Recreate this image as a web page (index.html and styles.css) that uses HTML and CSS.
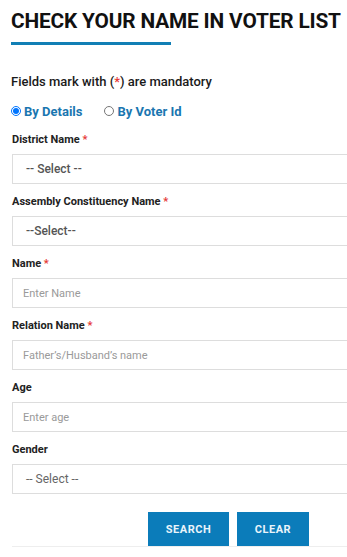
FILE: index.html
```html
<!DOCTYPE html>
<html>
<head>
    <meta charset="UTF-8">
    <title>Check Your Name in Voter List</title>
    <link rel="stylesheet" href="styles.css">
</head>
<body>
    <div class="container">
        <h1 class="page-title">CHECK YOUR NAME IN VOTER LIST</h1>
        <div class="title-bar"></div>

        <p class="mandatory">Fields mark with (<span class="req">*</span>) are mandatory</p>

        <div class="search-type">
            <label class="radio-opt"><input type="radio" name="stype" checked> By Details</label>
            <label class="radio-opt"><input type="radio" name="stype"> By Voter Id</label>
        </div>

        <form class="voter-form">
            <div class="field">
                <label class="field-label">District Name <span class="req">*</span></label>
                <div class="field-box select-box">-- Select --</div>
            </div>
            <div class="field">
                <label class="field-label">Assembly Constituency Name <span class="req">*</span></label>
                <div class="field-box select-box">--Select--</div>
            </div>
            <div class="field">
                <label class="field-label">Name <span class="req">*</span></label>
                <input class="field-box" type="text" placeholder="Enter Name">
            </div>
            <div class="field">
                <label class="field-label">Relation Name <span class="req">*</span></label>
                <input class="field-box" type="text" placeholder="Father’s/Husband’s name">
            </div>
            <div class="field">
                <label class="field-label">Age</label>
                <input class="field-box" type="text" placeholder="Enter age">
            </div>
            <div class="field">
                <label class="field-label">Gender</label>
                <div class="field-box select-box light">-- Select --</div>
            </div>

            <div class="actions">
                <button type="button" class="action-btn search-btn">SEARCH</button>
                <button type="button" class="action-btn clear-btn">CLEAR</button>
            </div>
        </form>
    </div>
</body>
</html>
```

FILE: styles.css
```css
body {
    font-family: Roboto, 'Liberation Sans', sans-serif;
    margin: 0;
    background: #fff;
    color: #1a1a1a;
    overflow: hidden;
}

.container {
    padding-left: 11px;
}

.page-title {
    margin: 0;
    padding-top: 9px;
    font-size: 20.8px;
    font-weight: 700;
    line-height: 24px;
    color: #111;
    letter-spacing: -0.15px;
    white-space: nowrap;
}

.title-bar {
    width: 160px;
    height: 3px;
    background: #117fb5;
    margin-top: 9px;
}

.mandatory {
    margin: 28px 0 0;
    font-size: 13px;
    font-weight: 500;
    line-height: 18px;
    color: #1a1a1a;
}

.req {
    color: #e53935;
}

.search-type {
    display: flex;
    gap: 22px;
    margin-top: 11px;
    height: 18px;
    align-items: center;
}

.radio-opt {
    display: flex;
    align-items: center;
    font-size: 13px;
    font-weight: 700;
    color: #1a76b0;
}

.radio-opt input {
    margin: 0 3px 0 0;
    width: 10px;
    height: 10px;
}

.voter-form {
    margin-top: 13px;
    padding-left: 1px;
}

.field {
    display: flex;
    flex-direction: column;
    gap: 7px;
    margin-bottom: 11px;
}

.field-label {
    font-size: 11px;
    font-weight: 700;
    line-height: 14px;
    color: #222;
}

.field-box {
    box-sizing: border-box;
    height: 30px;
    border: 1px solid #ddd;
    border-right: none;
    padding: 0 10px;
    font-family: inherit;
    font-size: 11px;
    color: #555;
    display: flex;
    align-items: center;
    background: #fff;
    width: 100%;
}

input.field-box::placeholder {
    color: #9a9a9a;
}

.select-box {
    padding-left: 13px;
    font-size: 12px;
    font-weight: 500;
}

.select-box.light {
    font-weight: 400;
    color: #666;
}

.actions {
    display: flex;
    gap: 8px;
    padding: 7px 0 0 136px;
    border-bottom: 1px solid #eee;
}

.action-btn {
    background: #0b7cba;
    color: #eaf4fa;
    border: none;
    height: 34px;
    font-family: inherit;
    font-size: 11px;
    font-weight: 700;
    letter-spacing: 0.5px;
    cursor: pointer;
}

.search-btn {
    width: 81px;
}

.clear-btn {
    width: 72px;
}
```
